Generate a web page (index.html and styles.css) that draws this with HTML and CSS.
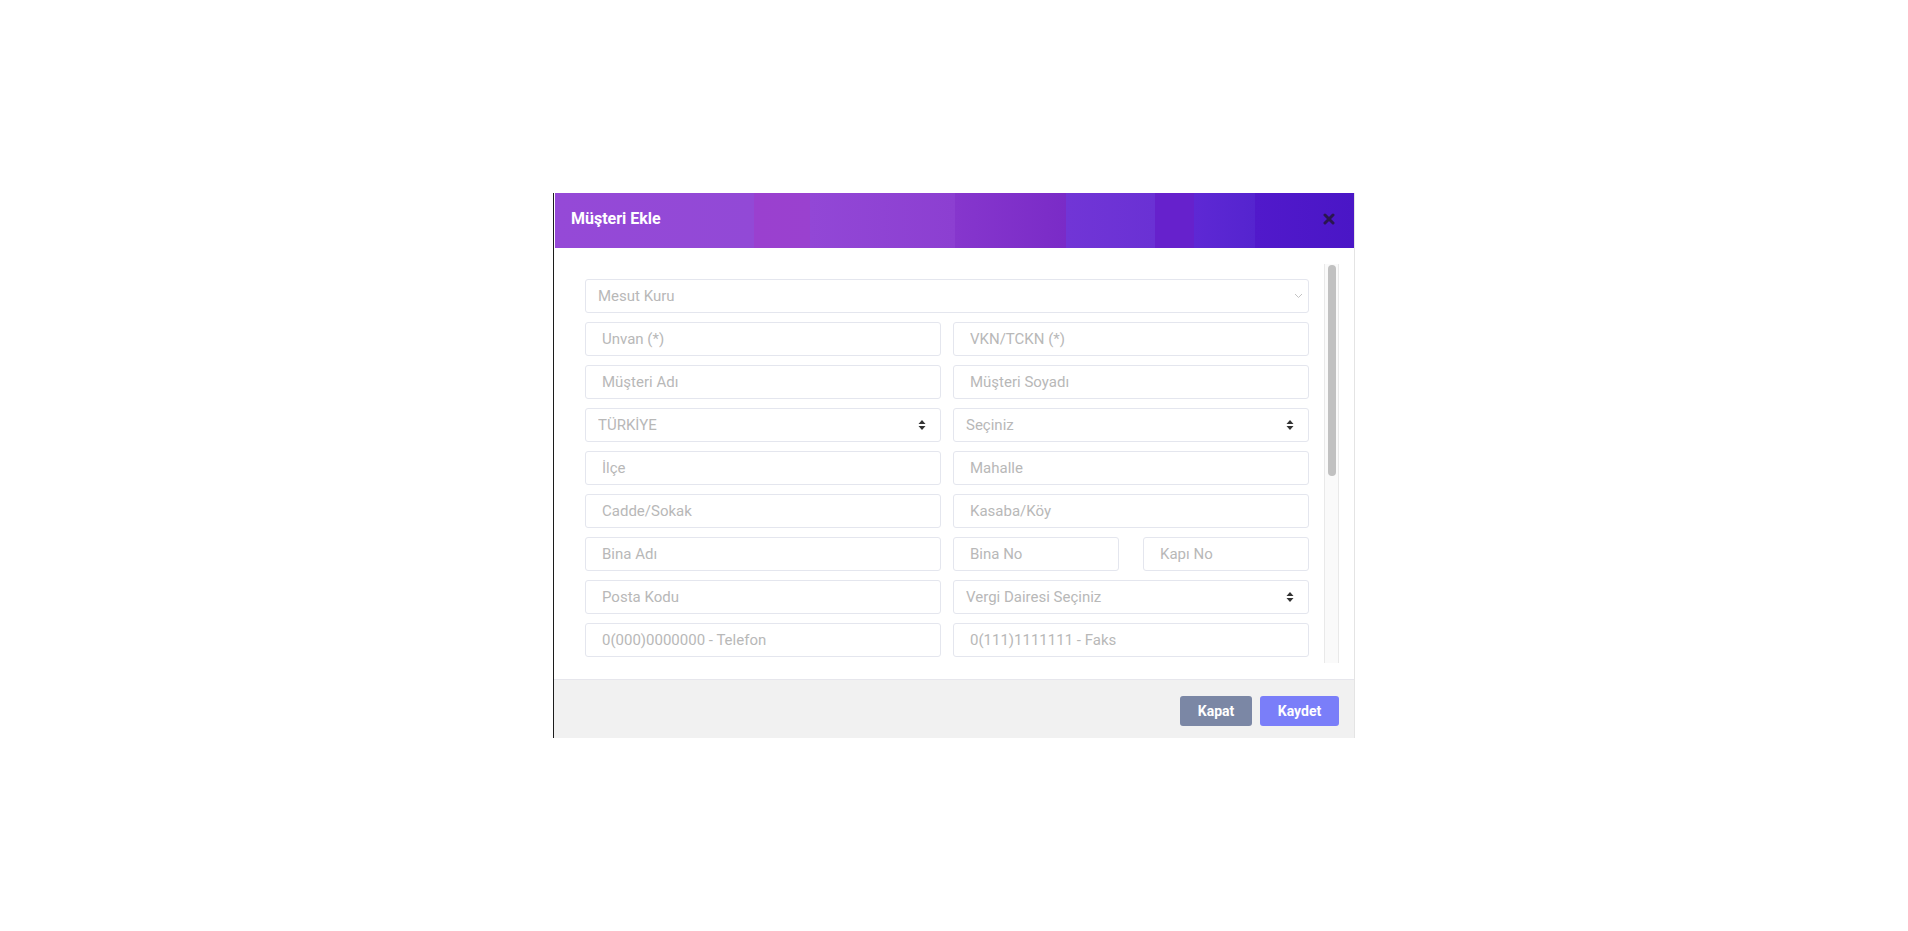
FILE: index.html
```html
<!DOCTYPE html>
<html lang="tr">
<head>
    <meta charset="UTF-8">
    <meta name="viewport" content="width=device-width, initial-scale=1.0">
    <title>Müşteri Ekle</title>
    <link rel="stylesheet" href="styles.css">
</head>
<body>
    <div class="modal">
        <div class="modal-header">
            <h4 class="modal-title">Müşteri Ekle</h4>
            <button class="close-btn" type="button" aria-label="Kapat">
                <svg width="12" height="12" viewBox="0 0 12 12"><path d="M2 2 L10 10 M10 2 L2 10" stroke="currentColor" stroke-width="3" stroke-linecap="round"/></svg>
            </button>
        </div>

        <div class="modal-body">
            <div class="scroll-area">
                <div class="field first">
                    <select class="form-select">
                        <option>Mesut Kuru</option>
                    </select>
                    <svg class="chevron" width="9" height="6" viewBox="0 0 9 6"><path d="M1 1 L4.5 4.5 L8 1" fill="none" stroke="currentColor" stroke-width="1"/></svg>
                </div>

                <div class="row">
                    <input type="text" placeholder="Unvan (*)">
                    <input type="text" placeholder="VKN/TCKN (*)">
                </div>
                <div class="row">
                    <input type="text" placeholder="Müşteri Adı">
                    <input type="text" placeholder="Müşteri Soyadı">
                </div>
                <div class="row">
                    <div class="field">
                        <select class="form-select"><option>TÜRKİYE</option></select>
                        <svg class="sort" width="8" height="10" viewBox="0 0 8 10"><path d="M4 0 L7.5 4 L0.5 4 Z M4 10 L7.5 6 L0.5 6 Z" fill="currentColor"/></svg>
                    </div>
                    <div class="field">
                        <select class="form-select"><option>Seçiniz</option></select>
                        <svg class="sort" width="8" height="10" viewBox="0 0 8 10"><path d="M4 0 L7.5 4 L0.5 4 Z M4 10 L7.5 6 L0.5 6 Z" fill="currentColor"/></svg>
                    </div>
                </div>
                <div class="row">
                    <input type="text" placeholder="İlçe">
                    <input type="text" placeholder="Mahalle">
                </div>
                <div class="row">
                    <input type="text" placeholder="Cadde/Sokak">
                    <input type="text" placeholder="Kasaba/Köy">
                </div>
                <div class="row">
                    <input type="text" placeholder="Bina Adı">
                    <div class="split">
                        <input type="text" placeholder="Bina No">
                        <input type="text" placeholder="Kapı No">
                    </div>
                </div>
                <div class="row">
                    <input type="text" placeholder="Posta Kodu">
                    <div class="field">
                        <select class="form-select"><option>Vergi Dairesi Seçiniz</option></select>
                        <svg class="sort" width="8" height="10" viewBox="0 0 8 10"><path d="M4 0 L7.5 4 L0.5 4 Z M4 10 L7.5 6 L0.5 6 Z" fill="currentColor"/></svg>
                    </div>
                </div>
                <div class="row">
                    <input type="text" placeholder="0(000)0000000 - Telefon">
                    <input type="text" placeholder="0(111)1111111 - Faks">
                </div>
                <div class="row">
                    <input type="text" placeholder="0(500)0000000 - Cep Telefonu">
                    <input type="text" placeholder="E-Posta">
                </div>
                <div class="row">
                    <input type="text" placeholder="Web Adresi">
                    <input type="text" placeholder="Açıklama">
                </div>
            </div>
            <div class="scrollbar">
                <div class="scrollbar-thumb"></div>
            </div>
        </div>

        <div class="modal-footer">
            <button class="btn btn-close" type="button">Kapat</button>
            <button class="btn btn-save" type="button">Kaydet</button>
        </div>
    </div>
</body>
</html>
```

FILE: styles.css
```css
body {
    margin: 0;
    padding: 0;
    background-color: #fff;
    font-family: Roboto, "Liberation Sans", sans-serif;
    color: #333;
}
.modal {
    width: 800px;
    margin: 193px 0 0 553px;
    border-left: 1px solid #1c1c1c;
    border-right: 1px solid #e4e4e4;
    background-color: #fff;
}
.modal-header {
    height: 55px;
    box-sizing: border-box;
    display: flex;
    align-items: center;
    justify-content: space-between;
    padding: 0 19px 4px 16px;
    margin-left: 1px;
    background: linear-gradient(90deg,
        #9549d7 0px, #9249d6 199px,
        #9a40cf 199px, #9a41cf 255px,
        #9247d6 255px, #8c3fd1 400px,
        #8636cd 400px, #7a2bc7 511px,
        #7135d6 511px, #6a31d4 600px,
        #6621cc 600px, #6621cc 639px,
        #5e28d4 639px, #5524cf 700px,
        #5119cb 700px, #4a16c6 100%);
}
.modal-title {
    margin: 0;
    font-size: 16px;
    font-weight: bold;
    color: #fff;
}
.close-btn {
    border: none;
    background: none;
    padding: 0;
    color: #2a1650;
    display: flex;
    cursor: pointer;
}
.modal-body {
    display: flex;
    padding: 16px 15px;
}
.scroll-area {
    flex: 1;
    height: 399px;
    overflow: hidden;
    padding: 15px 15px 0 16px;
    box-sizing: border-box;
}
.scrollbar {
    width: 15px;
    height: 399px;
    box-sizing: border-box;
    padding: 1px 2px 0 3px;
    background-color: #fafafa;
    border-left: 1px solid #e9e9e9;
    border-right: 1px solid #e9e9e9;
}
.scrollbar-thumb {
    height: 211px;
    border-radius: 4px;
    background-color: #c1c1c1;
}
.row {
    display: grid;
    grid-template-columns: 1fr 1fr;
    gap: 12px;
    margin-bottom: 9px;
}
.split {
    display: grid;
    grid-template-columns: 1fr 1fr;
    gap: 24px;
}
.field {
    position: relative;
}
.field.first {
    margin-bottom: 9px;
}
input, select {
    width: 100%;
    height: 34px;
    box-sizing: border-box;
    border: 1px solid #e4e6ee;
    border-radius: 3px;
    background-color: #fff;
    font-family: Roboto, "Liberation Sans", sans-serif;
    font-size: 15px;
    color: #b8b8b8;
    outline: none;
}
input {
    padding: 0 16px;
}
input::placeholder {
    color: #b8b8b8;
}
select {
    appearance: none;
    -webkit-appearance: none;
    padding: 0 30px 0 12px;
}
.chevron {
    position: absolute;
    right: 6px;
    top: 14px;
    color: #c4c4c4;
}
.sort {
    position: absolute;
    right: 15px;
    top: 12px;
    color: #333;
}
.modal-footer {
    display: flex;
    justify-content: flex-end;
    gap: 8px;
    padding: 16px 15px 12px;
    background-color: #f1f1f1;
    border-top: 1px solid #e6e6ec;
}
.btn {
    height: 30px;
    border: none;
    border-radius: 3px;
    color: #fff;
    font-family: Roboto, "Liberation Sans", sans-serif;
    font-size: 14px;
    font-weight: bold;
    cursor: pointer;
}
.btn-close {
    width: 72px;
    background-color: #7b87a5;
}
.btn-save {
    width: 79px;
    background-color: #7a7ef9;
}
```
